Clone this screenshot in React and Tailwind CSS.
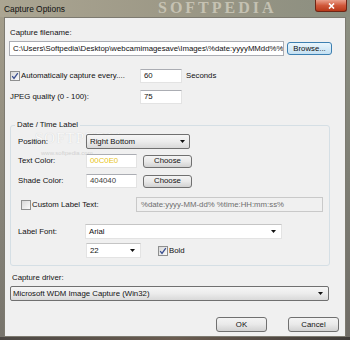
import React from "react";

function Check({ checked }) {
  return (
    <span className="w-[10px] h-[10px] border border-[#8e8f8f] bg-gradient-to-br from-[#d8d8d8] to-[#fbfbfb] flex items-center justify-center shrink-0">
      {checked && (
        <svg width="8" height="8" viewBox="0 0 8 8">
          <path d="M1.2 4.2 L3 6.4 L6.8 1.2" stroke="#3a4f90" strokeWidth="1.3" fill="none" />
        </svg>
      )}
    </span>
  );
}

function Arrow() {
  return (
    <svg width="5" height="3" viewBox="0 0 5 3" className="shrink-0">
      <path d="M0 0H5L2.5 3Z" fill="#111" />
    </svg>
  );
}

function Btn({ children, className = "", blue = false }) {
  return (
    <div
      className={
        "flex items-center justify-center rounded-[3px] border leading-[10px] " +
        (blue
          ? "border-[#3c7fb1] bg-gradient-to-b from-[#eaf6fd] to-[#c4e0f2] "
          : "border-[#707070] bg-gradient-to-b from-[#f4f4f4] via-[#e9e9e9] to-[#d2d2d2] ") +
        className
      }
    >
      {children}
    </div>
  );
}

export default function App() {
  return (
    <div className="w-[350px] h-[340px] overflow-hidden relative bg-[#8f8a7c] font-['Liberation_Sans',Arial,sans-serif] text-[7.8px] text-[#111]">
      {/* Title bar */}
      <div className="h-[17px] relative flex items-center bg-gradient-to-r from-[#aba592] via-[#9c9886] to-[#8b8e80]">
        <span className="ml-[4px] text-[8.4px] text-[#111] leading-[10px]">Capture Options</span>
        <span className="absolute left-[158px] top-0 font-['Liberation_Serif',serif] font-bold text-[16px] tracking-[3px] text-[#d9d5c6] opacity-70 leading-[16px]">
          SOFTPEDIA
        </span>
        <div className="absolute right-[3px] top-0 w-[32px] h-[12px] rounded-b-[3px] border border-t-0 border-[#6e2414] bg-gradient-to-b from-[#e9a08c] via-[#d0583a] to-[#b83818] flex items-center justify-center">
          <svg width="7" height="6" viewBox="0 0 7 6">
            <path d="M1 0.5 L6 5.5 M6 0.5 L1 5.5" stroke="#fff" strokeWidth="1.6" />
          </svg>
        </div>
      </div>

      <div className="flex">
        <div className="w-[4px] h-[320px] bg-gradient-to-b from-[#a39d8b] to-[#77746c]" />
        {/* Client */}
        <div className="w-[342px] h-[320px] bg-[#f0f0f0] border border-[#7d7a70] flex flex-col relative">
          <div className="mt-[10px] ml-[5px] leading-[10px] h-[10px]">Capture filename:</div>
          <div className="mt-[3px] ml-[4px] flex items-center">
            <div className="w-[275px] h-[15px] bg-white border border-[#abadb3] flex items-center pl-[3px] leading-[10px] whitespace-nowrap overflow-hidden">
              C:\Users\Softpedia\Desktop\webcamimagesave\Images\%date:yyyyMMdd%%
            </div>
            <Btn blue className="ml-[3px] w-[45px] h-[13px]">Browse...</Btn>
          </div>

          <div className="mt-[13px] ml-[5px] flex items-start">
            <div className="w-[130px] flex items-center h-[13px]">
              <Check checked />
              <span className="ml-[1px] leading-[10px]">Automatically capture every....</span>
            </div>
            <div className="w-[42px] h-[14px] bg-white border border-[#e3e3e3] border-t-[#abadb3] flex items-center pl-[3px] leading-[10px]">60</div>
            <span className="ml-[4px] leading-[10px] mt-[2px]">Seconds</span>
          </div>

          <div className="mt-[7px] ml-[5px] flex items-center">
            <span className="w-[130px] leading-[10px]">JPEG quality (0 - 100):</span>
            <div className="w-[42px] h-[14px] bg-white border border-[#e3e3e3] border-t-[#abadb3] flex items-center pl-[3px] leading-[10px]">75</div>
          </div>

          {/* Group */}
          <div className="mt-[21px] ml-[5px] w-[320px] h-[141px] border border-[#d5dfe5] rounded-[3px] relative flex flex-col">
            <span className="absolute left-[4px] top-[-6px] px-[2px] bg-[#f0f0f0] leading-[10px]">Date / Time Label</span>
            <span className="absolute left-[24px] top-[3px] font-['Liberation_Serif',serif] text-[15px] tracking-[1px] text-[#f9f9f9] leading-[18px] [text-shadow:0_0_1px_#c8c8c8]">
              SOFTPEDIA
            </span>
            <span className="absolute left-[30px] top-[23px] text-[6px] text-[#d0d0d0] leading-[8px]">www.softpedia.com</span>

            <div className="mt-[8px] flex items-center relative">
              <span className="ml-[7px] w-[68px] leading-[10px]">Position:</span>
              <div className="w-[104px] h-[15px] rounded-[2px] border border-[#707070] bg-gradient-to-b from-[#f6f6f6] via-[#ececec] to-[#d9d9d9] flex items-center justify-between pl-[3px] pr-[4px] leading-[10px]">
                <span>Right Bottom</span>
                <Arrow />
              </div>
            </div>

            <div className="mt-[5px] flex items-center relative">
              <span className="ml-[7px] w-[68px] leading-[10px]">Text Color:</span>
              <div className="w-[51px] h-[14px] bg-white border border-[#e3e3e3] border-t-[#abadb3] flex items-center pl-[3px] leading-[10px] text-[#e8c51a]">00C0E0</div>
              <Btn className="ml-[6px] w-[49px] h-[13px]">Choose</Btn>
            </div>

            <div className="mt-[6px] flex items-center relative">
              <span className="ml-[7px] w-[68px] leading-[10px]">Shade Color:</span>
              <div className="w-[51px] h-[14px] bg-white border border-[#e3e3e3] border-t-[#abadb3] flex items-center pl-[3px] leading-[10px] text-[#404040]">404040</div>
              <Btn className="ml-[6px] w-[49px] h-[13px]">Choose</Btn>
            </div>

            <div className="mt-[9px] flex items-center relative">
              <div className="ml-[10px] w-[115px] flex items-center">
                <Check />
                <span className="ml-[1px] leading-[10px]">Custom Label Text:</span>
              </div>
              <div className="w-[187px] h-[15px] bg-[#f0f0f0] border border-[#c9c9c9] flex items-center pl-[4px] leading-[10px] text-[#6d6d6d]">
                %date:yyyy-MM-dd% %time:HH:mm:ss%
              </div>
            </div>

            <div className="mt-[12px] flex items-center relative">
              <span className="ml-[7px] w-[67px] leading-[10px]">Label Font:</span>
              <div className="w-[197px] h-[15px] bg-white border border-[#e3e3e3] border-t-[#c5c5c5] flex items-center justify-between pl-[3px] pr-[5px] leading-[10px]">
                <span>Arial</span>
                <Arrow />
              </div>
            </div>

            <div className="mt-[4px] flex items-center relative">
              <div className="ml-[75px] w-[55px] h-[15px] bg-white border border-[#e3e3e3] border-t-[#c5c5c5] flex items-center justify-between pl-[3px] pr-[5px] leading-[10px]">
                <span>22</span>
                <Arrow />
              </div>
              <div className="ml-[17px] flex items-center">
                <Check checked />
                <span className="ml-[1px] leading-[10px]">Bold</span>
              </div>
            </div>
          </div>

          <div className="mt-[7px] ml-[7px] leading-[10px] h-[10px]">Capture driver:</div>
          <div className="mt-[3px] ml-[5px] w-[319px] h-[15px] rounded-[2px] border border-[#707070] bg-gradient-to-b from-[#f6f6f6] via-[#ececec] to-[#d9d9d9] flex items-center justify-between pl-[2px] pr-[5px] leading-[10px]">
            <span>Microsoft WDM Image Capture (Win32)</span>
            <Arrow />
          </div>

          <div className="mt-[16px] flex justify-end pr-[6px] gap-[21px]">
            <Btn className="w-[51px] h-[15px]">OK</Btn>
            <Btn className="w-[51px] h-[15px]">Cancel</Btn>
          </div>
        </div>
        <div className="w-[4px] h-[320px] bg-gradient-to-b from-[#8d9082] to-[#6f6c66]" />
      </div>
      <div className="h-[3px] bg-gradient-to-r from-[#4c4844] via-[#6a5c50] to-[#3f3b38]" />
    </div>
  );
}
